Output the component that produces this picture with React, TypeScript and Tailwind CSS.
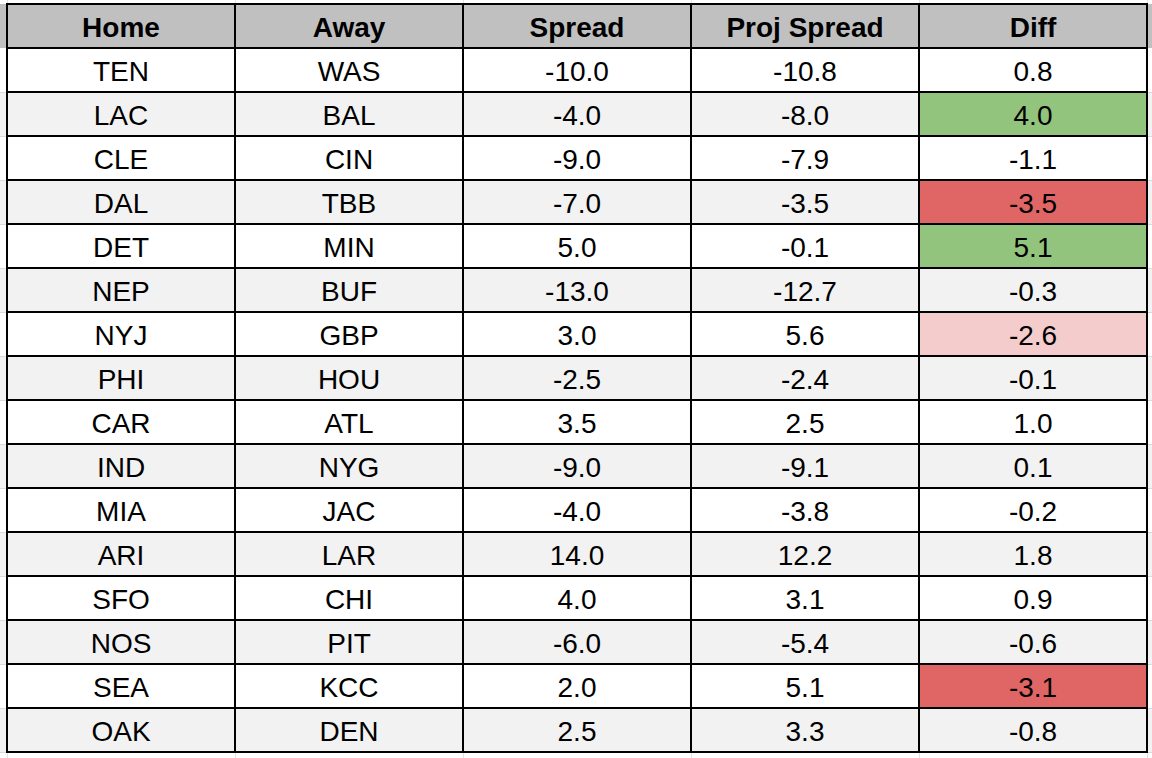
import React from 'react'

const rows = [
  { home: 'TEN', away: 'WAS', spread: '-10.0', proj: '-10.8', diff: '0.8', tone: '' },
  { home: 'LAC', away: 'BAL', spread: '-4.0', proj: '-8.0', diff: '4.0', tone: 'green' },
  { home: 'CLE', away: 'CIN', spread: '-9.0', proj: '-7.9', diff: '-1.1', tone: '' },
  { home: 'DAL', away: 'TBB', spread: '-7.0', proj: '-3.5', diff: '-3.5', tone: 'red' },
  { home: 'DET', away: 'MIN', spread: '5.0', proj: '-0.1', diff: '5.1', tone: 'green' },
  { home: 'NEP', away: 'BUF', spread: '-13.0', proj: '-12.7', diff: '-0.3', tone: '' },
  { home: 'NYJ', away: 'GBP', spread: '3.0', proj: '5.6', diff: '-2.6', tone: 'pink' },
  { home: 'PHI', away: 'HOU', spread: '-2.5', proj: '-2.4', diff: '-0.1', tone: '' },
  { home: 'CAR', away: 'ATL', spread: '3.5', proj: '2.5', diff: '1.0', tone: '' },
  { home: 'IND', away: 'NYG', spread: '-9.0', proj: '-9.1', diff: '0.1', tone: '' },
  { home: 'MIA', away: 'JAC', spread: '-4.0', proj: '-3.8', diff: '-0.2', tone: '' },
  { home: 'ARI', away: 'LAR', spread: '14.0', proj: '12.2', diff: '1.8', tone: '' },
  { home: 'SFO', away: 'CHI', spread: '4.0', proj: '3.1', diff: '0.9', tone: '' },
  { home: 'NOS', away: 'PIT', spread: '-6.0', proj: '-5.4', diff: '-0.6', tone: '' },
  { home: 'SEA', away: 'KCC', spread: '2.0', proj: '5.1', diff: '-3.1', tone: 'red' },
  { home: 'OAK', away: 'DEN', spread: '2.5', proj: '3.3', diff: '-0.8', tone: '' },
]

const toneClass: Record<string, string> = {
  green: 'bg-[#93c47d]',
  red: 'bg-[#e06666]',
  pink: 'bg-[#f4cccc]',
}

const headers = ['Home', 'Away', 'Spread', 'Proj Spread', 'Diff']

const cell = 'border-2 border-black p-0 pt-[3px] text-center align-middle'

export default function App() {
  return (
    <div className="w-[1152px] h-[758px] overflow-hidden bg-white font-['Liberation_Sans',Arial,sans-serif] text-black">
      <table className="table-fixed border-collapse w-[1152px]">
        <colgroup>
          <col className="w-[7px]" />
          <col className="w-[228px]" />
          <col className="w-[228px]" />
          <col className="w-[228px]" />
          <col className="w-[228px]" />
          <col className="w-[228px]" />
          <col className="w-[5px]" />
        </colgroup>
        <tbody>
          {/* spreadsheet strip above the table */}
          <tr className="h-[4px]">
            <td className="p-0" />
            {headers.map((h) => (
              <td key={h} className="p-0 border-x border-[#e2e2e2]" />
            ))}
            <td className="p-0" />
          </tr>

          <tr className="h-[44px] bg-[#c0c0c0]">
            <td className="p-0" />
            {headers.map((h) => (
              <td key={h} className={`${cell} text-[28px] font-bold leading-none`}>
                {h}
              </td>
            ))}
            <td className="p-0" />
          </tr>

          {rows.map((r, i) => (
            <tr
              key={r.home}
              className={`h-[44px] ${i % 2 === 1 ? 'bg-[#f2f2f2]' : 'bg-white'} text-[28px] leading-none`}
            >
              <td className="p-0 border-b border-[#dadada]" />
              <td className={cell}>{r.home}</td>
              <td className={cell}>{r.away}</td>
              <td className={cell}>{r.spread}</td>
              <td className={cell}>{r.proj}</td>
              <td className={`${cell} ${toneClass[r.tone] ?? ''}`}>{r.diff}</td>
              <td className="p-0 border-b border-[#dadada]" />
            </tr>
          ))}

          {/* spreadsheet strip below the table */}
          <tr className="h-[6px]">
            <td className="p-0" />
            {headers.map((h) => (
              <td key={h} className="p-0 border-x border-[#e2e2e2]" />
            ))}
            <td className="p-0" />
          </tr>
        </tbody>
      </table>
    </div>
  )
}
